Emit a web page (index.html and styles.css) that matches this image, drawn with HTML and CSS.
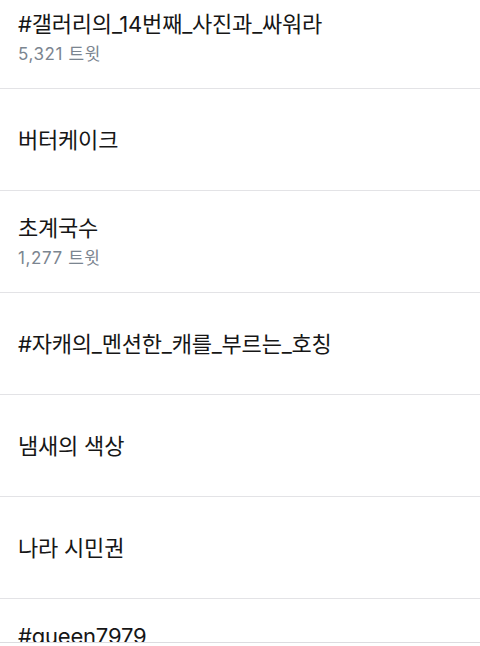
FILE: index.html
```html
<!DOCTYPE html>
<html lang="ko">
<head>
<meta charset="utf-8">
<link rel="stylesheet" href="styles.css">
</head>
<body>
<div class="screen">
  <ul class="trends">
    <li class="trend">
      <div class="title">#갤러리의_14번째_사진과_싸워라</div>
      <div class="count">5,321 트윗</div>
    </li>
    <li class="trend">
      <div class="title">버터케이크</div>
    </li>
    <li class="trend">
      <div class="title">초계국수</div>
      <div class="count">1,277 트윗</div>
    </li>
    <li class="trend">
      <div class="title">#자캐의_멘션한_캐를_부르는_호칭</div>
    </li>
    <li class="trend">
      <div class="title">냄새의 색상</div>
    </li>
    <li class="trend">
      <div class="title">나라 시민권</div>
    </li>
    <li class="trend">
      <div class="title">#queen7979</div>
      <div class="count">2,034 트윗</div>
    </li>
  </ul>
  <div class="tabbar"></div>
</div>
</body>
</html>
```
FILE: styles.css
```css
html, body {
  margin: 0;
  padding: 0;
  background: #ffffff;
}
body {
  font-family: "Inter", "Noto Sans CJK KR", sans-serif;
  color: #161616;
}
.screen {
  width: 480px;
  height: 646px;
  overflow: hidden;
  position: relative;
}
.trends {
  list-style: none;
  margin: -13px 0 0 0;
  padding: 0;
}
.trend {
  height: 101px;
  border-bottom: 1px solid #e3e3e6;
  display: flex;
  flex-direction: column;
  justify-content: center;
  padding-left: 18px;
  gap: 8px;
}
.title {
  font-size: 22px;
  line-height: 24px;
  letter-spacing: -0.2px;
}
.count {
  font-size: 17px;
  line-height: 20px;
  letter-spacing: 0.6px;
  color: #7b8590;
}
.tabbar {
  position: absolute;
  left: 0;
  right: 0;
  bottom: 0;
  height: 3px;
  background: #ffffff;
  border-top: 1px solid #dcdce0;
}
```
